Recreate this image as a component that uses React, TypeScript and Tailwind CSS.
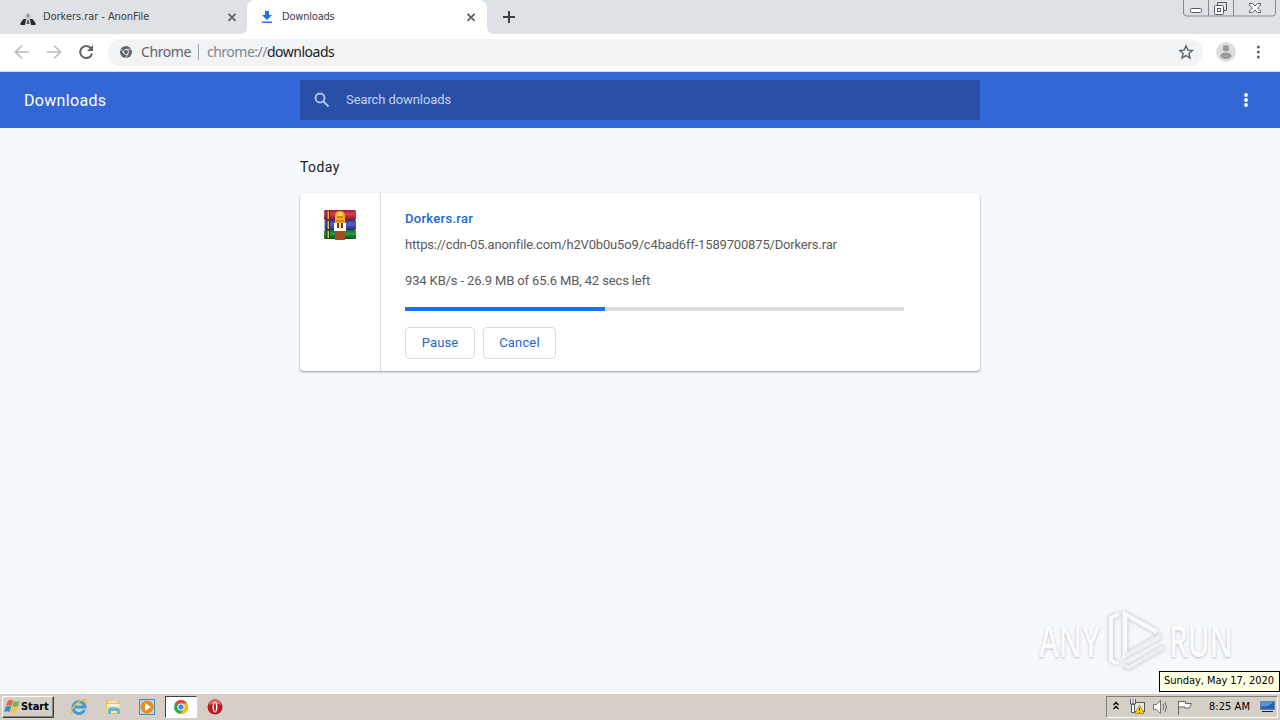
import React from "react";

const TAHOMA = "font-['DejaVu_Sans_Condensed','DejaVu_Sans',sans-serif] [font-stretch:condensed]";

function CloseX({ className }: { className: string }) {
  return (
    <svg className={className} width="10" height="9" viewBox="0 0 10 9">
      <path d="M1.500 .8l7 7M8.500 .8l-7 7" stroke="#5f6368" strokeWidth="1.8" />
    </svg>
  );
}

function TabStrip() {
  return (
    <div className="relative flex h-[34px] bg-[#dee1e6]">
      <div className="flex w-[247px] items-center rounded-br-lg pl-5">
        <svg width="16" height="14" viewBox="0 0 16 14" className="mt-1 shrink-0">
          <path d="M.5 13V11l3-4h3l1 1h1l1-1h3l3 4v2z" fill="#24272b" />
          <path d="M4.500 5l2-3.500h3l2 3.500-3.500 2z" fill="#c3c7ca" />
          <path d="M7 2h2v3H7z" fill="#84898e" />
          <path d="M6 7.500h4l1 5.500H5z" fill="#e8eaed" />
          <path d="M7.300 8h1.400l.8 4h-3z" fill="#555" />
        </svg>
        <span className={`ml-[7px] w-[184px] whitespace-nowrap text-[11px] tracking-[-0.05px] text-[#3c4043] ${TAHOMA}`}>Dorkers.rar - AnonFile</span>
        <CloseX className="shrink-0" />
      </div>
      <div className="flex w-60 items-center rounded-t-lg bg-white pl-[14px]">
        <svg width="12" height="14" viewBox="0 0 12 14" className="shrink-0">
          <path d="M4 1h4v4h3L6 10 1 5h3zM1 11.500h10V13H1z" fill="#1a73e8" />
        </svg>
        <span className={`ml-[9px] w-[184px] whitespace-nowrap text-[11px] tracking-[-0.2px] text-[#3c4043] ${TAHOMA}`}>Downloads</span>
        <CloseX className="shrink-0" />
      </div>
      <svg width="12" height="12" viewBox="0 0 12 12" className="ml-4 mt-[11px]">
        <path d="M6 0v12M0 6h12" stroke="#3c4043" strokeWidth="2" />
      </svg>
      <svg width="7" height="7" viewBox="0 0 7 7" className="absolute bottom-0 left-[240px]">
        <path d="M7 0v7H0Q7 7 7 0" fill="white" />
      </svg>
      <svg width="7" height="7" viewBox="0 0 7 7" className="absolute bottom-0 left-[487px]">
        <path d="M0 0v7h7Q0 7 0 0" fill="white" />
      </svg>
      <svg width="93" height="18" viewBox="0 0 93 18" className="ml-auto mr-1" fill="none" stroke="#868b93">
        <path d="M.5 0v13q0 3 3 3h86q3 0 3-3V0M25.500 0v16M50.500 0v16" />
        <g stroke="#555b64">
          <rect x="7.500" y="8.500" width="11" height="4" rx="1" fill="#fff" />
          <path d="M34.500 5V2.500h9v8H41" />
          <rect x="31.500" y="5.500" width="9" height="9" rx="1" fill="#fff" />
          <rect x="34.500" y="8.500" width="3" height="3" />
          <path d="M66.500 3.500h3l2.500 2.500 2.500-2.500h3v2L74.500 8l3 3v1.500h-3L72 10l-2.500 2.500h-3V11l3-3-3-2.500z" fill="#fff" />
        </g>
      </svg>
    </div>
  );
}

function Toolbar() {
  return (
    <div className="flex h-[38px] items-center border-b border-[#d8dce2] bg-white pb-px">
      <svg width="80" height="18" viewBox="0 0 80 18" className="ml-[14px] shrink-0" fill="none">
        <path d="M15 9H1.500M8 2.500L1.500 9 8 15.500M33 9h13.500M40 2.500L46.500 9 40 15.500" stroke="#b9bbbe" strokeWidth="1.700" />
        <path d="M76.800 5.200A6 6 0 1 0 78 10.500" stroke="#5f6368" strokeWidth="2" />
        <path d="M79 2v6h-6z" fill="#5f6368" />
      </svg>
      <div className="ml-[14px] flex h-[27px] w-[1095px] items-center rounded-full bg-[#f1f3f4] pl-3">
        <svg width="12" height="12" viewBox="0 0 12 12" className="shrink-0">
          <circle cx="6" cy="6" r="6" fill="#5f6368" />
          <circle cx="6" cy="6" r="2.500" fill="#5f6368" stroke="#f1f3f4" strokeWidth=".9" />
          <path d="M6 3.300h5.300M3.700 7.300L1 2.800M8.300 7.400L5.600 12" stroke="#f1f3f4" strokeWidth=".8" />
        </svg>
        <div className="ml-[9px] flex items-center whitespace-nowrap pb-0.5 font-['Noto_Sans',sans-serif] text-[14px] tracking-[-0.5px] text-[#5f6368]">
          <span className="w-[57px] tracking-[-0.4px]">Chrome</span>
          <span className="mr-2 mt-0.5 h-4 w-px bg-[#9aa0a6]" />
          <span className="text-[#80868b]">chrome://<span className="text-[#202124]">downloads</span></span>
        </div>
        <svg width="16" height="16" viewBox="0 0 16 16" className="ml-auto mr-[9px]">
          <path d="M8 1.800l1.800 4.300 4.600.4-3.500 3 1.100 4.500-4-2.400L4 14l1.100-4.500-3.500-3 4.600-.4z" fill="none" stroke="#5f6368" strokeWidth="1.400" />
        </svg>
      </div>
      <svg width="20" height="20" viewBox="0 0 20 20" className="ml-[13px]">
        <circle cx="10" cy="10" r="10" fill="#dedede" />
        <circle cx="10" cy="6.300" r="3.200" fill="#9b9b9b" />
        <ellipse cx="10" cy="13.800" rx="5.500" ry="3.200" fill="#9b9b9b" />
      </svg>
      <svg width="4" height="14" viewBox="0 0 4 14" className="ml-5" fill="#5f6368">
        <circle cx="2.300" cy="2" r="1.500" /><circle cx="2.300" cy="7" r="1.500" /><circle cx="2.300" cy="12" r="1.500" />
      </svg>
    </div>
  );
}

function Header() {
  return (
    <header className="flex h-14 items-center bg-[#3367d6] font-[Roboto,sans-serif]">
      <h1 className="w-[300px] pl-6 pt-0.5 text-[16px] tracking-[0.32px] text-white">Downloads</h1>
      <div className="flex h-10 w-[680px] items-center bg-[#2850a7] pl-[14px]">
        <svg width="16" height="16" viewBox="0 0 16 16" fill="none" stroke="#b4c6ec" strokeWidth="1.900">
          <circle cx="6" cy="6" r="4.500" /><path d="M9.500 9.500l5 5" />
        </svg>
        <span className="ml-4 text-[13px] tracking-[-0.09px] text-[#c4d2f0]">Search downloads</span>
      </div>
      <svg width="4" height="14" viewBox="0 0 4 14" className="ml-auto mr-8" fill="white">
        <circle cx="2" cy="2" r="1.900" /><circle cx="2" cy="7" r="1.900" /><circle cx="2" cy="12" r="1.900" />
      </svg>
    </header>
  );
}

function RarIcon() {
  return (
    <svg width="34" height="32" viewBox="0 0 34 32">
      <defs>
        <linearGradient id="red" x2="0" y2="1"><stop stopColor="#9b1b2b" /><stop offset=".4" stopColor="#dd4055" /><stop offset="1" stopColor="#83111f" /></linearGradient>
        <linearGradient id="blue" x2="0" y2="1"><stop stopColor="#27358f" /><stop offset=".4" stopColor="#5560d4" /><stop offset="1" stopColor="#252b78" /></linearGradient>
        <linearGradient id="green" x2="0" y2="1"><stop stopColor="#126329" /><stop offset=".4" stopColor="#2b9c4b" /><stop offset="1" stopColor="#0c4b20" /></linearGradient>
      </defs>
      <rect x="1" y="1" width="32" height="10" rx="1.500" fill="url(#red)" />
      <rect x="1.500" y="11" width="31.500" height="10" rx="1.500" fill="url(#blue)" />
      <rect x="1" y="21" width="32" height="9" rx="1.500" fill="url(#green)" />
      <path d="M3.500 2H7v8H3.500zM3.500 12H7v8H3.500zM3.500 22H7v7H3.500z" fill="#192b3b" />
      <path d="M4.500 2H6v8H4.500zM4.500 12H6v8H4.500zM4.500 22H6v7H4.500z" fill="#edc736" />
      <path d="M12 20h10v11H12z" fill="#a24c17" />
      <path d="M12 7q0-5 5-5t5 5v8H12z" fill="#efaa27" />
      <path d="M14 4q3-2 5 0v3h-5z" fill="#ffd24a" />
      <path d="M14 8h6M13 12h8" stroke="#b56313" />
      <path d="M11 14h3v5h6v-5h3v8H11z" fill="#fff" />
      <path d="M14 14h6v5h-6z" fill="#7b3512" />
      <path d="M16 14h2v6h-2z" fill="#f4dfad" />
    </svg>
  );
}

function Watermark() {
  return (
    <div className="absolute left-[1039px] top-[479px] flex h-[68px] items-center font-['Open_Sans',sans-serif] text-[44px] font-semibold text-[#fcfcfd] opacity-95 [text-shadow:0_1px_3px_#b4b7ba]">
      <span className="w-[68px] pb-0.5"><span className="inline-block origin-left scale-x-[0.68]">ANY</span></span>
      <svg width="60" height="68" viewBox="0 0 60 68" className="shrink-0 drop-shadow-[0_0_2px_#b4b7ba]" fill="none" stroke="#f8f9fa" strokeWidth="4.500">
        <path d="M50 25L18 7v42l36-20" />
        <path d="M12 7L4 11v42l7 4" strokeWidth="4" />
        <path d="M16 57l5 4 36-21M18 49l36-20" strokeWidth="4" stroke="#eceeef" />
      </svg>
      <span className="w-[70px] pb-0.5 pl-0.5"><span className="inline-block origin-left scale-x-[0.67]">RUN</span></span>
    </div>
  );
}

function Downloads() {
  return (
    <main className="relative h-[565px] bg-[#f6f9fc] pl-[300px] pt-[29px] font-[Roboto,sans-serif] text-[13px]">
      <h2 className="h-9 text-[14px] leading-[21px] tracking-[0.4px] text-[#202124]">Today</h2>
      <div className="flex h-[178px] w-[680px] rounded bg-white shadow-[0_1px_2px_rgba(60,64,67,0.4),0_1px_3px_rgba(60,64,67,0.15)]">
        <div className="w-[81px] border-r border-[#dadce0] pl-[23px] pt-4"><RarIcon /></div>
        <div className="pl-6 pt-4 text-[#5a5a5a]">
          <div className="h-[26px] leading-5 font-medium tracking-[0.3px] text-[#1967d2]">Dorkers.rar</div>
          <div className="h-9 whitespace-nowrap leading-5 tracking-[-0.165px]">https://cdn-05.anonfile.com/h2V0b0u5o9/c4bad6ff-1589700875/Dorkers.rar</div>
          <div className="leading-5 tracking-[-0.13px]">934 KB/s - 26.9 MB of 65.6 MB, 42 secs left</div>
          <div className="mt-4 h-1 w-[499px] bg-[#dcdcdc]"><div className="h-full w-[200px] bg-[#1a73e8]" /></div>
          <div className="mt-4 flex gap-2 tracking-[0.15px] text-[#1967d2]">
            <button className="h-8 w-[70px] rounded border border-[#dadce0]">Pause</button>
            <button className="h-8 w-[73px] rounded border border-[#dadce0]">Cancel</button>
          </div>
        </div>
      </div>
      <Watermark />
      <div className={`absolute bottom-px right-0 z-10 flex h-[21px] w-[121px] items-center whitespace-nowrap border border-black bg-[#ffffe1] pl-1 text-[11px] tracking-[-0.05px] text-black ${TAHOMA}`}>Sunday, May 17, 2020</div>
    </main>
  );
}

function Taskbar() {
  return (
    <footer className={`flex h-[27px] items-center border-t border-white bg-[#d5cfc8] text-[11px] text-black ${TAHOMA}`}>
      <div className="ml-0.5 flex h-[22px] w-[52px] items-center border border-b-[#404040] border-l-white border-r-[#404040] border-t-white pl-px font-bold shadow-[inset_-1px_-1px_#808080]">
        <svg width="17" height="16" viewBox="0 0 17 16" className="shrink-0">
          <path d="M4 1.500q3-1.500 5 0L7.500 7Q5 5.500 2 7z" fill="#ea6535" />
          <path d="M9.700 2q3 1.500 6 0L14 7.500q-3 1-5.800-.3z" fill="#77b843" />
          <path d="M1.700 7.700q3-1.500 5.500 0L5.600 13q-2.600-1.500-5.600 0z" fill="#348bd0" />
          <path d="M7.900 8q3 1.500 5.900.2L12 13.700q-3 1-5.700-.3z" fill="#f4c534" />
        </svg>
        <span className="tracking-[-0.1px]">Start</span>
      </div>
      <svg width="18" height="18" viewBox="0 0 18 18" className="ml-4" fill="none">
        <path d="M14.500 12A6 6 0 1 1 15 9H5" stroke="#399fd7" strokeWidth="3" />
        <path d="M2 16C-1 12 9 0 16 2c1 .4 1 2 0 3" stroke="#e9bc43" strokeWidth="1.300" />
      </svg>
      <svg width="18" height="18" viewBox="0 0 18 18" className="ml-4">
        <path d="M2 4V2h5l1 1h7v2h1v11H2z" fill="#e5c664" /><path d="M3 6h13v9H3z" fill="#f5e7a6" />
        <path d="M4 4h9M4 7h10" stroke="#fff" />
        <path d="M4 16v-5l2-1.500h7l3 1.500v5h-3v-3H7v3z" fill="#62b7dc" />
      </svg>
      <svg width="18" height="18" viewBox="0 0 18 18" className="ml-4">
        <rect x="1.500" y="1.500" width="15" height="15" fill="#b8d8ef" stroke="#4b8abd" />
        <circle cx="9" cy="9" r="6.500" fill="#ee8b18" /><path d="M7 5l6 4-6 4z" fill="#fff" />
      </svg>
      <div className="ml-[9px] flex h-[22px] w-8 items-center justify-center border border-b-white border-l-[#404040] border-r-white border-t-[#404040] bg-white">
        <svg width="14" height="14" viewBox="0 0 14 14">
          <circle cx="7" cy="7" r="7" fill="#31a853" />
          <path d="M7 7L1 3.400A7 7 0 0 1 13 3.500H7z" fill="#ea4335" />
          <path d="M7 3.500h6A7 7 0 0 1 6.500 14L10 8z" fill="#fbbc05" />
          <circle cx="7" cy="7" r="3.200" fill="#4285f4" stroke="#fff" />
        </svg>
      </div>
      <svg width="16" height="16" viewBox="0 0 16 16" className="ml-[10px]">
        <circle cx="8" cy="8" r="7.500" fill="#b7191f" /><path d="M2 6a6 6 0 0 1 12 0q-6-3-12 0" fill="#df6565" />
        <ellipse cx="8" cy="8" rx="2.500" ry="5.500" fill="#fff" /><ellipse cx="8" cy="8" rx=".9" ry="4.500" fill="#9d1419" />
      </svg>
      <div className="ml-auto mr-0.5 flex h-[22px] w-[172px] items-center border border-b-white border-l-[#808080] border-r-white border-t-[#808080]">
        <svg width="8" height="10" viewBox="0 0 8 10" className="mb-0.5 ml-[5px] shrink-0" fill="none" stroke="#000" strokeWidth="1.300"><path d="M1.500 4L4 1.500 6.500 4M1.500 8L4 5.500 6.500 8" /></svg>
        <svg width="18" height="18" viewBox="0 0 18 18" className="ml-2 shrink-0">
          <rect x="5.500" y="4.500" width="11" height="9" fill="#e8e8e8" stroke="#555" />
          <path d="M2.500 1v5h5V1M5 1v5" fill="#fff" stroke="#555" />
          <path d="M3.500 6.500h3v8h-3z" fill="#fff" stroke="#555" />
          <path d="M11.500 7l4.500 8.500H7z" fill="#ffdb26" stroke="#b89018" /><path d="M11.500 10v3M11.500 14v1" stroke="#332c00" />
        </svg>
        <svg width="18" height="16" viewBox="0 0 18 16" className="ml-[6px] shrink-0" fill="none" stroke="#737373">
          <path d="M1.500 5.500h3l4-4v13l-4-4h-3z" fill="#fff" /><path d="M11 5q2 3 0 6M13 3q3 5 0 10" />
        </svg>
        <svg width="17" height="17" viewBox="0 0 17 17" className="ml-[6px] shrink-0">
          <path d="M2.500 2v14M2.500 2.500h7v2h6l-2 4.500h-5V8h-6" fill="#fff" stroke="#656565" />
        </svg>
        <span className="ml-[16px] w-[50px] whitespace-nowrap tracking-[0.05px]">8:25 AM</span>
        <svg width="16" height="14" viewBox="0 0 16 14" className="shrink-0">
          <rect x="1.500" y="1.500" width="14" height="8" fill="#285eb5" stroke="#6584a9" /><path d="M2 6q7 2 12-4H2z" fill="#5194df" /><path d="M3 11h11v1H3z" fill="#222" />
        </svg>
      </div>
    </footer>
  );
}

export default function App() {
  return (
    <div className="h-[720px] w-[1280px] overflow-hidden bg-white">
      <TabStrip />
      <Toolbar />
      <Header />
      <Downloads />
      <Taskbar />
    </div>
  );
}
